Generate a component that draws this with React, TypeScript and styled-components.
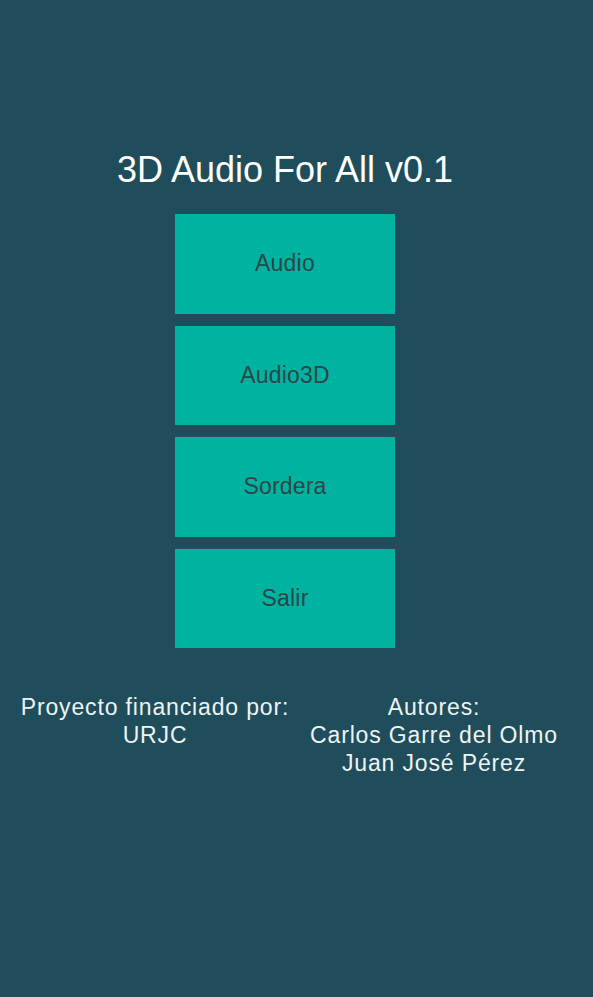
import React from "react";
import styled, { createGlobalStyle } from "styled-components";

const Global = createGlobalStyle`
  html, body { margin: 0; padding: 0; background: #1f4d5b; }
  body { font-family: "Liberation Sans", Arial, sans-serif; }
`;

const Screen = styled.div`
  width: 593px;
  height: 997px;
  background: #1f4d5b;
  display: flex;
  flex-direction: column;
  align-items: center;
  padding-top: 150px;
  box-sizing: border-box;
  padding-right: 23px;
`;

const Title = styled.h1`
  margin: 0;
  font-weight: 400;
  font-size: 36px;
  line-height: 40px;
  color: #ffffff;
  white-space: nowrap;
`;

const Menu = styled.div`
  margin-top: 24px;
  display: flex;
  flex-direction: column;
  gap: 12px;
`;

const MenuButton = styled.button`
  width: 220px;
  height: 99.5px;
  border: none;
  border-radius: 0;
  background: #00b3a0;
  color: #2b4649;
  font-family: "Liberation Sans", Arial, sans-serif;
  font-size: 23px;
  letter-spacing: 0.2px;
  display: flex;
  align-items: center;
  justify-content: center;
  padding: 0;
  cursor: pointer;
`;

const Footer = styled.div`
  margin-top: 45px;
  display: grid;
  grid-template-columns: 310px 248px;
  align-self: flex-start;
`;

const Column = styled.div`
  display: flex;
  flex-direction: column;
  align-items: center;
  color: #eef3f3;
  font-size: 23px;
  letter-spacing: 0.85px;
  line-height: 28px;
  white-space: nowrap;
`;

export default function App() {
  return (
    <>
      <Global />
      <Screen>
        <Title>3D Audio For All v0.1</Title>
        <Menu>
          <MenuButton>Audio</MenuButton>
          <MenuButton>Audio3D</MenuButton>
          <MenuButton>Sordera</MenuButton>
          <MenuButton>Salir</MenuButton>
        </Menu>
        <Footer>
          <Column>
            <span>Proyecto financiado por:</span>
            <span>URJC</span>
          </Column>
          <Column>
            <span>Autores:</span>
            <span>Carlos Garre del Olmo</span>
            <span>Juan José Pérez</span>
          </Column>
        </Footer>
      </Screen>
    </>
  );
}
